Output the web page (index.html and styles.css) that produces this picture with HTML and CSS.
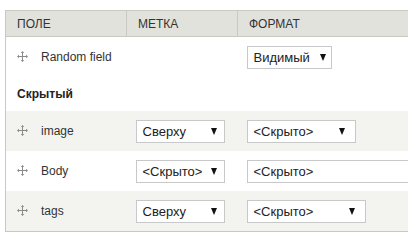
FILE: index.html
```html
<!DOCTYPE html>
<html>
<head>
<meta charset="utf-8">
<link rel="stylesheet" href="styles.css">
</head>
<body>
<table class="fields">
  <thead>
    <tr>
      <th class="col-field">ПОЛЕ</th>
      <th class="col-label">МЕТКА</th>
      <th class="col-format">ФОРМАТ</th>
    </tr>
  </thead>
  <tbody>
    <tr class="row">
      <td class="cell-field"><span class="drag"><svg width="11" height="11" viewBox="0 0 11 11"><path d="M5.5 1v9M1 5.5h9" stroke="#8a8a8a" stroke-width="1" fill="none"/><path d="M5.5 0L3.8 2h3.4zM5.5 11L3.8 9h3.4zM0 5.5L2 3.8v3.4zM11 5.5L9 3.8v3.4z" fill="#8a8a8a"/></svg></span>Random field</td>
      <td></td>
      <td><div class="select w-vis"><span>Видимый</span><span class="arrow"></span></div></td>
    </tr>
    <tr class="region">
      <td colspan="3">Скрытый</td>
    </tr>
    <tr class="row alt">
      <td class="cell-field"><span class="drag"><svg width="11" height="11" viewBox="0 0 11 11"><path d="M5.5 1v9M1 5.5h9" stroke="#8a8a8a" stroke-width="1" fill="none"/><path d="M5.5 0L3.8 2h3.4zM5.5 11L3.8 9h3.4zM0 5.5L2 3.8v3.4zM11 5.5L9 3.8v3.4z" fill="#8a8a8a"/></svg></span>image</td>
      <td><div class="select w-label"><span>Сверху</span><span class="arrow"></span></div></td>
      <td><div class="select w-hid"><span>&lt;Скрыто&gt;</span><span class="arrow"></span></div></td>
    </tr>
    <tr class="row">
      <td class="cell-field"><span class="drag"><svg width="11" height="11" viewBox="0 0 11 11"><path d="M5.5 1v9M1 5.5h9" stroke="#8a8a8a" stroke-width="1" fill="none"/><path d="M5.5 0L3.8 2h3.4zM5.5 11L3.8 9h3.4zM0 5.5L2 3.8v3.4zM11 5.5L9 3.8v3.4z" fill="#8a8a8a"/></svg></span>Body</td>
      <td><div class="select w-label"><span>&lt;Скрыто&gt;</span><span class="arrow"></span></div></td>
      <td class="clip"><div class="select w-wide"><span>&lt;Скрыто&gt;</span><span class="arrow"></span></div></td>
    </tr>
    <tr class="row alt last">
      <td class="cell-field"><span class="drag"><svg width="11" height="11" viewBox="0 0 11 11"><path d="M5.5 1v9M1 5.5h9" stroke="#8a8a8a" stroke-width="1" fill="none"/><path d="M5.5 0L3.8 2h3.4zM5.5 11L3.8 9h3.4zM0 5.5L2 3.8v3.4zM11 5.5L9 3.8v3.4z" fill="#8a8a8a"/></svg></span>tags</td>
      <td><div class="select w-label"><span>Сверху</span><span class="arrow"></span></div></td>
      <td><div class="select w-tags"><span>&lt;Скрыто&gt;</span><span class="arrow"></span></div></td>
    </tr>
  </tbody>
</table>
</body>
</html>
```
FILE: styles.css
```css
html, body {
  margin: 0;
  padding: 0;
  overflow: hidden;
  background: #fff;
}
body {
  padding: 10px 0 0 5px;
  font-family: "Liberation Sans", Arial, sans-serif;
  color: #333;
}
.fields {
  border-collapse: collapse;
  width: 403px;
  table-layout: fixed;
  font-size: 12px;
}
.fields th {
  background: #e1e2dc;
  border: 1px solid #c9c9c4;
  font-weight: normal;
  text-align: left;
  height: 26px;
  padding: 0 0 0 11px;
  box-sizing: border-box;
  color: #333;
}
.fields th.col-format { border-right: 0; }
.col-field { width: 121px; }
.col-label { width: 111px; }
.fields td {
  padding: 0 0 0 9px;
  vertical-align: middle;
  border-left: 1px solid #c9c9c4;
  border-right: 0;
}
.fields td + td { border-left: 0; }
.fields td.clip { overflow: hidden; padding-right: 0; }
.row td { height: 40px; }
.row.alt { background: #f3f3ef; }
.row.last td { border-bottom: 1px solid #c9c9c4; }
.region td {
  height: 34px;
  font-weight: bold;
  padding-left: 11px;
  color: #222;
}
.fields td.cell-field { padding-left: 11px; }
.drag {
  display: inline-block;
  width: 24px;
  vertical-align: -1px;
}
.drag svg { display: block; }
.select {
  display: flex;
  align-items: center;
  justify-content: space-between;
  box-sizing: border-box;
  height: 23px;
  border: 1px solid #c8c8c8;
  background: #fff;
  padding: 0 10px 0 6px;
  font-size: 13px;
  color: #222;
}
.arrow {
  width: 0;
  height: 0;
  border-left: 3.5px solid transparent;
  border-right: 3.5px solid transparent;
  border-top: 7px solid #111;
}
.w-vis { width: 85px; padding-right: 5px; }
.w-label { width: 89px; padding-right: 7px; }
.w-hid { width: 109px; }
.w-tags { width: 119px; }
.w-wide { width: 220px; }
```
